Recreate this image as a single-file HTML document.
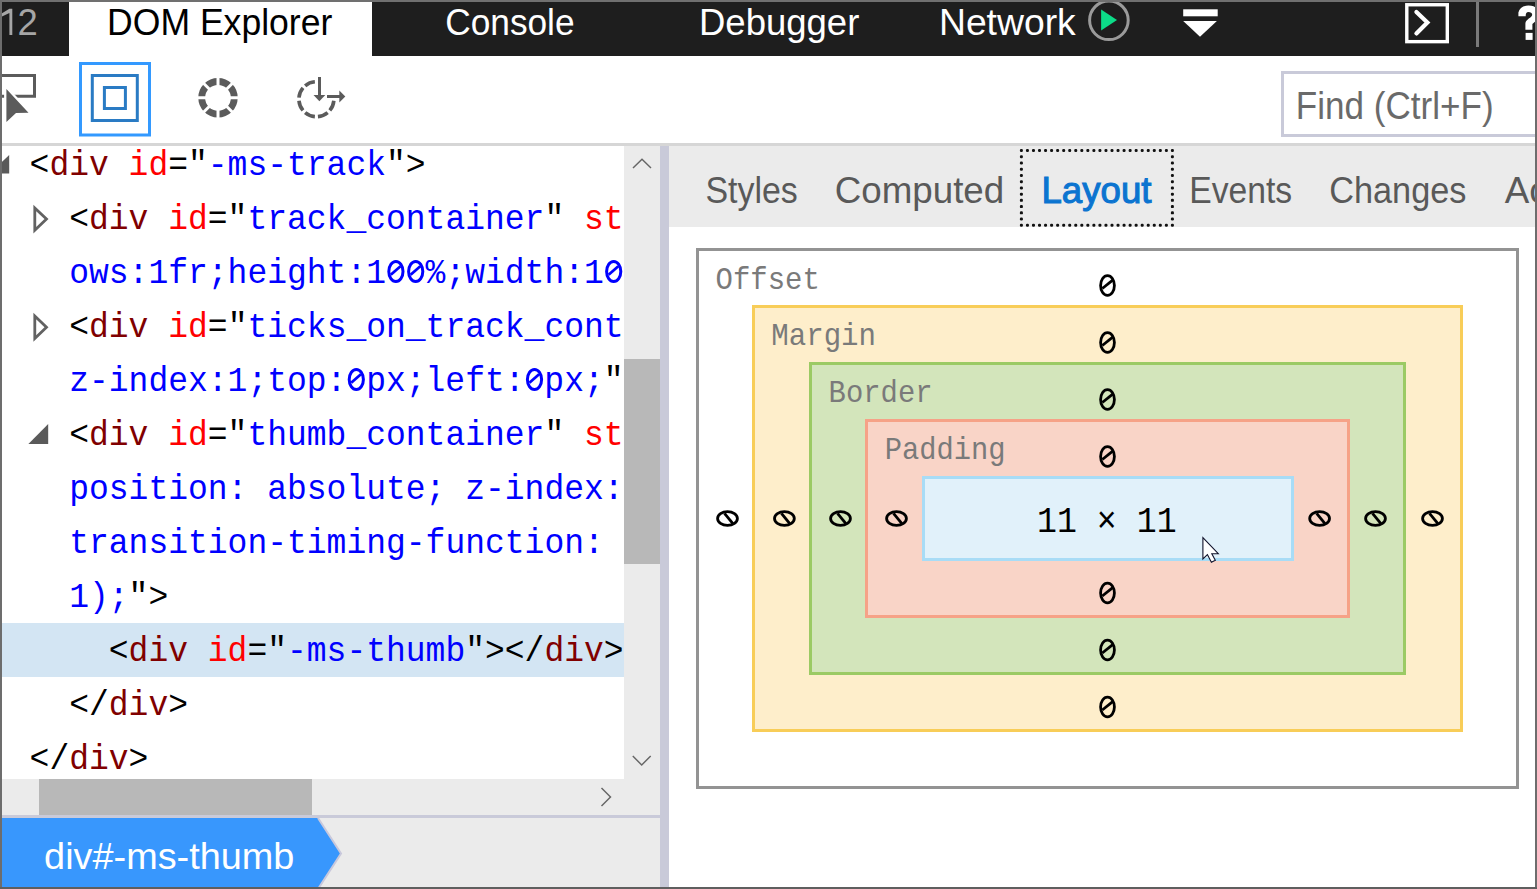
<!DOCTYPE html>
<html><head><meta charset="utf-8"><title>DOM Explorer</title>
<style>
html,body{margin:0;padding:0;width:1537px;height:889px;overflow:hidden;background:#ffffff;}
svg{display:block;}

</style></head><body>
<svg width="1537" height="889" viewBox="0 0 1537 889">
<rect x="0" y="0" width="1537" height="56" fill="#1e1e1e"/>
<rect x="69" y="2" width="303" height="54" fill="#ffffff"/>
<path d="M9.4 8.8 L12.3 8.8 L12.3 35 L9.4 35 L9.4 13 L2 16.5 L2 13.3 Z" fill="#a6a6a6"/>
<text x="17.57" y="35" font-family='"Liberation Sans",sans-serif' font-size="37.5" fill="#a6a6a6" textLength="20.27" lengthAdjust="spacingAndGlyphs" >2</text>
<text x="107.08" y="35" font-family='"Liberation Sans",sans-serif' font-size="37.5" fill="#000000" textLength="225.21" lengthAdjust="spacingAndGlyphs" >DOM Explorer</text>
<text x="445.21" y="35" font-family='"Liberation Sans",sans-serif' font-size="37.5" fill="#ffffff" textLength="129.36" lengthAdjust="spacingAndGlyphs" >Console</text>
<text x="699.01" y="35" font-family='"Liberation Sans",sans-serif' font-size="37.5" fill="#ffffff" textLength="160.30" lengthAdjust="spacingAndGlyphs" >Debugger</text>
<text x="938.94" y="35" font-family='"Liberation Sans",sans-serif' font-size="37.5" fill="#ffffff" textLength="136.81" lengthAdjust="spacingAndGlyphs" >Network</text>
<circle cx="1108.9" cy="20.3" r="19.3" fill="none" stroke="#9a9a9a" stroke-width="3"/>
<path d="M1101.1 9.6 L1117 20 L1101.1 30.5 Z" fill="#0cdc88"/>
<rect x="1183.2" y="9.3" width="34.5" height="7" fill="#ffffff"/>
<path d="M1183.2 21.1 L1216.9 21.1 L1200 36.8 Z" fill="#ffffff"/>
<rect x="1406.8" y="4.75" width="40.5" height="36.9" fill="none" stroke="#ffffff" stroke-width="3.4"/>
<path d="M1416.4 12 L1427.4 22.6 L1416.4 33.4" fill="none" stroke="#ffffff" stroke-width="4.2" stroke-linecap="round"/>
<rect x="1476" y="2" width="3" height="45" fill="#7a7a7a"/>
<path d="M1518.4 16.3 L1518.4 12.5 C1519.5 8 1523 5.6 1528.5 5.6 C1535.5 5.6 1539.5 9.5 1539.5 14.5 C1539.5 19.5 1535 21.5 1532.4 24 L1532.4 29.8 L1525.4 29.8 L1525.4 23.5 C1525.4 19.5 1532.2 17.5 1532.2 14.8 C1532.2 12.8 1530.5 12 1528.5 12 C1526.5 12 1525.7 13.2 1525.7 16.3 Z" fill="#ffffff"/>
<rect x="1525.6" y="32.9" width="7" height="7" fill="#ffffff"/>
<rect x="0" y="56" width="1537" height="87" fill="#ffffff"/>
<rect x="0" y="143" width="1537" height="3" fill="#d6d6d6"/>
<path d="M-10 75.5 H34.5 V96.2 H-10" fill="none" stroke="#5b5b5b" stroke-width="3"/>
<path d="M6.4 89 L28.5 112.8 L16 113 L6.4 122 Z" fill="#5b5b5b" stroke="#ffffff" stroke-width="4.6" stroke-linejoin="miter" style="paint-order:stroke"/>
<rect x="80.5" y="63.5" width="69" height="71.5" fill="none" stroke="#3399ff" stroke-width="3"/>
<rect x="92.3" y="75.5" width="45" height="45" fill="none" stroke="#2a7bc4" stroke-width="3"/>
<rect x="104.4" y="87.5" width="21" height="21" fill="none" stroke="#2a7bc4" stroke-width="3"/>
<circle cx="218" cy="97.8" r="16.3" fill="none" stroke="#5b5b5b" stroke-width="6.8"/>
<line x1="195.00" y1="97.80" x2="241.00" y2="97.80" stroke="#ffffff" stroke-width="3"/>
<line x1="201.74" y1="81.54" x2="234.26" y2="114.06" stroke="#ffffff" stroke-width="3"/>
<line x1="218.00" y1="74.80" x2="218.00" y2="120.80" stroke="#ffffff" stroke-width="3"/>
<line x1="234.26" y1="81.54" x2="201.74" y2="114.06" stroke="#ffffff" stroke-width="3"/>
<path d="M314.87 81.77 A17.5 17.5 0 0 0 305.15 85.79" fill="none" stroke="#5b5b5b" stroke-width="3.6"/>
<path d="M302.99 87.95 A17.5 17.5 0 0 0 298.97 97.67" fill="none" stroke="#5b5b5b" stroke-width="3.6"/>
<path d="M298.97 100.73 A17.5 17.5 0 0 0 302.99 110.45" fill="none" stroke="#5b5b5b" stroke-width="3.6"/>
<path d="M305.15 112.61 A17.5 17.5 0 0 0 314.87 116.63" fill="none" stroke="#5b5b5b" stroke-width="3.6"/>
<path d="M317.93 116.63 A17.5 17.5 0 0 0 327.65 112.61" fill="none" stroke="#5b5b5b" stroke-width="3.6"/>
<path d="M329.81 110.45 A17.5 17.5 0 0 0 333.83 100.73" fill="none" stroke="#5b5b5b" stroke-width="3.6"/>
<rect x="318" y="77" width="3" height="19" fill="#5b5b5b"/>
<path d="M313.5 95 L325.3 95 L319.4 101.2 Z" fill="#5b5b5b"/>
<rect x="327" y="95" width="13" height="3" fill="#5b5b5b"/>
<path d="M339.3 90.4 L345.3 96.5 L339.3 102.4 Z" fill="#5b5b5b"/>
<rect x="1282.5" y="72.5" width="270" height="63" fill="#ffffff" stroke="#c9cad9" stroke-width="3"/>
<text x="1295.82" y="119" font-family='"Liberation Sans",sans-serif' font-size="38" fill="#6a6a6a" textLength="197.75" lengthAdjust="spacingAndGlyphs" >Find (Ctrl+F)</text>
<rect x="0" y="146" width="660" height="669" fill="#ffffff"/>
<rect x="2" y="623" width="622" height="54" fill="#d3e5f3"/>
<text x="29.60" y="175" font-family='"Liberation Mono",monospace' font-size="34.5" textLength="396.00" lengthAdjust="spacingAndGlyphs" xml:space="preserve"><tspan fill="#000000">&lt;</tspan><tspan fill="#800000">div</tspan><tspan fill="#000000"> </tspan><tspan fill="#ff0000">id</tspan><tspan fill="#000000">=&quot;</tspan><tspan fill="#0000ff">-ms-track</tspan><tspan fill="#000000">&quot;&gt;</tspan></text>
<text x="69.20" y="229" font-family='"Liberation Mono",monospace' font-size="34.5" textLength="613.80" lengthAdjust="spacingAndGlyphs" xml:space="preserve"><tspan fill="#000000">&lt;</tspan><tspan fill="#800000">div</tspan><tspan fill="#000000"> </tspan><tspan fill="#ff0000">id</tspan><tspan fill="#000000">=&quot;</tspan><tspan fill="#0000ff">track_container</tspan><tspan fill="#000000">&quot; </tspan><tspan fill="#ff0000">style</tspan></text>
<text x="69.20" y="283" font-family='"Liberation Mono",monospace' font-size="34.5" textLength="594.00" lengthAdjust="spacingAndGlyphs" xml:space="preserve"><tspan fill="#0000ff">ows:1fr;height:1  %;width:1  %</tspan></text><g transform="translate(395.90 271.50)"><ellipse rx="7.1" ry="10" fill="none" stroke="#0000ff" stroke-width="3"/><path d="M-5.1 3.2 L4.6 -5.2" stroke="#0000ff" stroke-width="2.8"/></g><g transform="translate(415.70 271.50)"><ellipse rx="7.1" ry="10" fill="none" stroke="#0000ff" stroke-width="3"/><path d="M-5.1 3.2 L4.6 -5.2" stroke="#0000ff" stroke-width="2.8"/></g><g transform="translate(613.70 271.50)"><ellipse rx="7.1" ry="10" fill="none" stroke="#0000ff" stroke-width="3"/><path d="M-5.1 3.2 L4.6 -5.2" stroke="#0000ff" stroke-width="2.8"/></g><g transform="translate(633.50 271.50)"><ellipse rx="7.1" ry="10" fill="none" stroke="#0000ff" stroke-width="3"/><path d="M-5.1 3.2 L4.6 -5.2" stroke="#0000ff" stroke-width="2.8"/></g>
<text x="69.20" y="337" font-family='"Liberation Mono",monospace' font-size="34.5" textLength="653.40" lengthAdjust="spacingAndGlyphs" xml:space="preserve"><tspan fill="#000000">&lt;</tspan><tspan fill="#800000">div</tspan><tspan fill="#000000"> </tspan><tspan fill="#ff0000">id</tspan><tspan fill="#000000">=&quot;</tspan><tspan fill="#0000ff">ticks_on_track_container</tspan></text>
<text x="69.20" y="391" font-family='"Liberation Mono",monospace' font-size="34.5" textLength="574.20" lengthAdjust="spacingAndGlyphs" xml:space="preserve"><tspan fill="#0000ff">z-index:1;top: px;left: px;</tspan><tspan fill="#000000">&quot;&gt;</tspan></text><g transform="translate(356.30 379.50)"><ellipse rx="7.1" ry="10" fill="none" stroke="#0000ff" stroke-width="3"/><path d="M-5.1 3.2 L4.6 -5.2" stroke="#0000ff" stroke-width="2.8"/></g><g transform="translate(534.50 379.50)"><ellipse rx="7.1" ry="10" fill="none" stroke="#0000ff" stroke-width="3"/><path d="M-5.1 3.2 L4.6 -5.2" stroke="#0000ff" stroke-width="2.8"/></g>
<text x="69.20" y="445" font-family='"Liberation Mono",monospace' font-size="34.5" textLength="613.80" lengthAdjust="spacingAndGlyphs" xml:space="preserve"><tspan fill="#000000">&lt;</tspan><tspan fill="#800000">div</tspan><tspan fill="#000000"> </tspan><tspan fill="#ff0000">id</tspan><tspan fill="#000000">=&quot;</tspan><tspan fill="#0000ff">thumb_container</tspan><tspan fill="#000000">&quot; </tspan><tspan fill="#ff0000">style</tspan></text>
<text x="69.20" y="499" font-family='"Liberation Mono",monospace' font-size="34.5" textLength="594.00" lengthAdjust="spacingAndGlyphs" xml:space="preserve"><tspan fill="#0000ff">position: absolute; z-index: 1</tspan></text>
<text x="69.20" y="553" font-family='"Liberation Mono",monospace' font-size="34.5" textLength="653.40" lengthAdjust="spacingAndGlyphs" xml:space="preserve"><tspan fill="#0000ff">transition-timing-function: cubic</tspan></text>
<text x="69.20" y="607" font-family='"Liberation Mono",monospace' font-size="34.5" textLength="99.00" lengthAdjust="spacingAndGlyphs" xml:space="preserve"><tspan fill="#0000ff">1);</tspan><tspan fill="#000000">&quot;&gt;</tspan></text>
<text x="108.80" y="661" font-family='"Liberation Mono",monospace' font-size="34.5" textLength="514.80" lengthAdjust="spacingAndGlyphs" xml:space="preserve"><tspan fill="#000000">&lt;</tspan><tspan fill="#800000">div</tspan><tspan fill="#000000"> </tspan><tspan fill="#ff0000">id</tspan><tspan fill="#000000">=&quot;</tspan><tspan fill="#0000ff">-ms-thumb</tspan><tspan fill="#000000">&quot;&gt;&lt;/</tspan><tspan fill="#800000">div</tspan><tspan fill="#000000">&gt;</tspan></text>
<text x="69.20" y="715" font-family='"Liberation Mono",monospace' font-size="34.5" textLength="118.80" lengthAdjust="spacingAndGlyphs" xml:space="preserve"><tspan fill="#000000">&lt;/</tspan><tspan fill="#800000">div</tspan><tspan fill="#000000">&gt;</tspan></text>
<text x="29.60" y="769" font-family='"Liberation Mono",monospace' font-size="34.5" textLength="118.80" lengthAdjust="spacingAndGlyphs" xml:space="preserve"><tspan fill="#000000">&lt;/</tspan><tspan fill="#800000">div</tspan><tspan fill="#000000">&gt;</tspan></text>
<path d="M9.2 155 L9.2 173.6 L-10.6 173.6 Z" fill="#5a5a5a"/>
<path d="M34.8 208 L46.5 219 L34.8 230.2 Z" fill="none" stroke="#626262" stroke-width="2.8"/>
<path d="M34.8 316 L46.5 327.2 L34.8 338.5 Z" fill="none" stroke="#626262" stroke-width="2.8"/>
<path d="M48.2 424.1 L48.2 444 L28.4 444 Z" fill="#5a5a5a"/>
<rect x="624" y="146" width="36" height="633" fill="#ebebeb"/>
<rect x="624" y="359" width="36" height="205" fill="#b8b8b8"/>
<path d="M633 168 L642 159.3 L651 168" fill="none" stroke="#666" stroke-width="1.45"/>
<path d="M632.8 756 L641.7 765 L650.7 756" fill="none" stroke="#666" stroke-width="1.45"/>
<rect x="0" y="779" width="660" height="36" fill="#ebebeb"/>
<rect x="39" y="779" width="273" height="36" fill="#b8b8b8"/>
<path d="M601.5 788.1 L610.5 797 L601.5 806" fill="none" stroke="#666" stroke-width="1.45"/>
<rect x="0" y="815" width="660" height="3" fill="#c9cad9"/>
<rect x="0" y="818" width="660" height="71" fill="#ebebeb"/>
<path d="M2 818 L318 818 L341 853.5 L318 889 L2 889 Z" fill="#3897fd"/>
<path d="M318 818 L341 853.5 L318 889" fill="none" stroke="#c8c8dc" stroke-width="2"/>
<text x="44.11" y="868.6" font-family='"Liberation Sans",sans-serif' font-size="37.5" fill="#ffffff" textLength="250.28" lengthAdjust="spacingAndGlyphs" >div#-ms-thumb</text>
<rect x="660" y="146" width="9" height="743" fill="#c9cad9"/>
<rect x="669" y="146" width="868" height="81" fill="#ebebeb"/>
<rect x="669" y="227" width="868" height="662" fill="#ffffff"/>
<text x="705.46" y="203" font-family='"Liberation Sans",sans-serif' font-size="37.5" fill="#595959" textLength="92.37" lengthAdjust="spacingAndGlyphs" >Styles</text>
<text x="834.73" y="203" font-family='"Liberation Sans",sans-serif' font-size="37.5" fill="#595959" textLength="169.53" lengthAdjust="spacingAndGlyphs" >Computed</text>
<text x="1041.50" y="203" font-family='"Liberation Sans",sans-serif' font-size="37.5" fill="#0b74d0" textLength="109.97" lengthAdjust="spacingAndGlyphs" stroke="#0b74d0" stroke-width="1.1">Layout</text>
<text x="1189.24" y="203" font-family='"Liberation Sans",sans-serif' font-size="37.5" fill="#595959" textLength="102.98" lengthAdjust="spacingAndGlyphs" >Events</text>
<text x="1329.26" y="203" font-family='"Liberation Sans",sans-serif' font-size="37.5" fill="#595959" textLength="137.18" lengthAdjust="spacingAndGlyphs" >Changes</text>
<text x="1504.63" y="203" font-family='"Liberation Sans",sans-serif' font-size="37.5" fill="#595959" textLength="200.14" lengthAdjust="spacingAndGlyphs" >Accessibility</text>
<g fill="#111"><rect x="1019.90" y="149.00" width="3" height="3" rx="1.2"/><rect x="1019.90" y="223.80" width="3" height="3" rx="1.2"/><rect x="1025.94" y="149.00" width="3" height="3" rx="1.2"/><rect x="1025.94" y="223.80" width="3" height="3" rx="1.2"/><rect x="1031.98" y="149.00" width="3" height="3" rx="1.2"/><rect x="1031.98" y="223.80" width="3" height="3" rx="1.2"/><rect x="1038.02" y="149.00" width="3" height="3" rx="1.2"/><rect x="1038.02" y="223.80" width="3" height="3" rx="1.2"/><rect x="1044.06" y="149.00" width="3" height="3" rx="1.2"/><rect x="1044.06" y="223.80" width="3" height="3" rx="1.2"/><rect x="1050.10" y="149.00" width="3" height="3" rx="1.2"/><rect x="1050.10" y="223.80" width="3" height="3" rx="1.2"/><rect x="1056.14" y="149.00" width="3" height="3" rx="1.2"/><rect x="1056.14" y="223.80" width="3" height="3" rx="1.2"/><rect x="1062.18" y="149.00" width="3" height="3" rx="1.2"/><rect x="1062.18" y="223.80" width="3" height="3" rx="1.2"/><rect x="1068.22" y="149.00" width="3" height="3" rx="1.2"/><rect x="1068.22" y="223.80" width="3" height="3" rx="1.2"/><rect x="1074.26" y="149.00" width="3" height="3" rx="1.2"/><rect x="1074.26" y="223.80" width="3" height="3" rx="1.2"/><rect x="1080.30" y="149.00" width="3" height="3" rx="1.2"/><rect x="1080.30" y="223.80" width="3" height="3" rx="1.2"/><rect x="1086.34" y="149.00" width="3" height="3" rx="1.2"/><rect x="1086.34" y="223.80" width="3" height="3" rx="1.2"/><rect x="1092.38" y="149.00" width="3" height="3" rx="1.2"/><rect x="1092.38" y="223.80" width="3" height="3" rx="1.2"/><rect x="1098.42" y="149.00" width="3" height="3" rx="1.2"/><rect x="1098.42" y="223.80" width="3" height="3" rx="1.2"/><rect x="1104.46" y="149.00" width="3" height="3" rx="1.2"/><rect x="1104.46" y="223.80" width="3" height="3" rx="1.2"/><rect x="1110.50" y="149.00" width="3" height="3" rx="1.2"/><rect x="1110.50" y="223.80" width="3" height="3" rx="1.2"/><rect x="1116.54" y="149.00" width="3" height="3" rx="1.2"/><rect x="1116.54" y="223.80" width="3" height="3" rx="1.2"/><rect x="1122.58" y="149.00" width="3" height="3" rx="1.2"/><rect x="1122.58" y="223.80" width="3" height="3" rx="1.2"/><rect x="1128.62" y="149.00" width="3" height="3" rx="1.2"/><rect x="1128.62" y="223.80" width="3" height="3" rx="1.2"/><rect x="1134.66" y="149.00" width="3" height="3" rx="1.2"/><rect x="1134.66" y="223.80" width="3" height="3" rx="1.2"/><rect x="1140.70" y="149.00" width="3" height="3" rx="1.2"/><rect x="1140.70" y="223.80" width="3" height="3" rx="1.2"/><rect x="1146.74" y="149.00" width="3" height="3" rx="1.2"/><rect x="1146.74" y="223.80" width="3" height="3" rx="1.2"/><rect x="1152.78" y="149.00" width="3" height="3" rx="1.2"/><rect x="1152.78" y="223.80" width="3" height="3" rx="1.2"/><rect x="1158.82" y="149.00" width="3" height="3" rx="1.2"/><rect x="1158.82" y="223.80" width="3" height="3" rx="1.2"/><rect x="1164.86" y="149.00" width="3" height="3" rx="1.2"/><rect x="1164.86" y="223.80" width="3" height="3" rx="1.2"/><rect x="1170.90" y="149.00" width="3" height="3" rx="1.2"/><rect x="1170.90" y="223.80" width="3" height="3" rx="1.2"/><rect x="1019.90" y="155.23" width="3" height="3" rx="1.2"/><rect x="1170.90" y="155.23" width="3" height="3" rx="1.2"/><rect x="1019.90" y="161.47" width="3" height="3" rx="1.2"/><rect x="1170.90" y="161.47" width="3" height="3" rx="1.2"/><rect x="1019.90" y="167.70" width="3" height="3" rx="1.2"/><rect x="1170.90" y="167.70" width="3" height="3" rx="1.2"/><rect x="1019.90" y="173.93" width="3" height="3" rx="1.2"/><rect x="1170.90" y="173.93" width="3" height="3" rx="1.2"/><rect x="1019.90" y="180.17" width="3" height="3" rx="1.2"/><rect x="1170.90" y="180.17" width="3" height="3" rx="1.2"/><rect x="1019.90" y="186.40" width="3" height="3" rx="1.2"/><rect x="1170.90" y="186.40" width="3" height="3" rx="1.2"/><rect x="1019.90" y="192.63" width="3" height="3" rx="1.2"/><rect x="1170.90" y="192.63" width="3" height="3" rx="1.2"/><rect x="1019.90" y="198.87" width="3" height="3" rx="1.2"/><rect x="1170.90" y="198.87" width="3" height="3" rx="1.2"/><rect x="1019.90" y="205.10" width="3" height="3" rx="1.2"/><rect x="1170.90" y="205.10" width="3" height="3" rx="1.2"/><rect x="1019.90" y="211.33" width="3" height="3" rx="1.2"/><rect x="1170.90" y="211.33" width="3" height="3" rx="1.2"/><rect x="1019.90" y="217.57" width="3" height="3" rx="1.2"/><rect x="1170.90" y="217.57" width="3" height="3" rx="1.2"/></g>
<rect x="697.5" y="249.5" width="820" height="538" fill="#ffffff" stroke="#939393" stroke-width="3"/>
<rect x="753.5" y="306.5" width="708" height="424" fill="#feeecb" stroke="#f8cd58" stroke-width="3"/>
<rect x="810.5" y="363.5" width="594" height="310" fill="#d3e5bb" stroke="#9bca64" stroke-width="3"/>
<rect x="866.5" y="420.5" width="482" height="196" fill="#f9d4c7" stroke="#f6a287" stroke-width="3"/>
<rect x="923.5" y="477.5" width="369" height="82" fill="#e1f1fa" stroke="#a8dcf6" stroke-width="3"/>
<text x="715.56" y="288.6" font-family='"Liberation Mono",monospace' font-size="30.5" fill="#7a7a7a" textLength="104.34" lengthAdjust="spacingAndGlyphs" >Offset</text>
<text x="771.27" y="345.3" font-family='"Liberation Mono",monospace' font-size="30.5" fill="#7a7a7a" textLength="104.79" lengthAdjust="spacingAndGlyphs" >Margin</text>
<text x="828.62" y="402" font-family='"Liberation Mono",monospace' font-size="30.5" fill="#7a7a7a" textLength="103.98" lengthAdjust="spacingAndGlyphs" >Border</text>
<text x="884.73" y="459" font-family='"Liberation Mono",monospace' font-size="30.5" fill="#7a7a7a" textLength="120.73" lengthAdjust="spacingAndGlyphs" >Padding</text>
<text x="1037.00" y="532" font-family='"Liberation Mono",monospace' font-size="36" fill="#000000" textLength="139.61" lengthAdjust="spacingAndGlyphs" >11 × 11</text>
<g transform="translate(1107.5 285.5) rotate(0)"><ellipse cx="0" cy="0" rx="6.9" ry="9.9" fill="none" stroke="#000" stroke-width="2.8"/><path d="M-5.2 3 L5.2 -5.4" stroke="#000" stroke-width="2.8"/></g>
<g transform="translate(1107.5 342.5) rotate(0)"><ellipse cx="0" cy="0" rx="6.9" ry="9.9" fill="none" stroke="#000" stroke-width="2.8"/><path d="M-5.2 3 L5.2 -5.4" stroke="#000" stroke-width="2.8"/></g>
<g transform="translate(1107.5 399.5) rotate(0)"><ellipse cx="0" cy="0" rx="6.9" ry="9.9" fill="none" stroke="#000" stroke-width="2.8"/><path d="M-5.2 3 L5.2 -5.4" stroke="#000" stroke-width="2.8"/></g>
<g transform="translate(1107.5 456.5) rotate(0)"><ellipse cx="0" cy="0" rx="6.9" ry="9.9" fill="none" stroke="#000" stroke-width="2.8"/><path d="M-5.2 3 L5.2 -5.4" stroke="#000" stroke-width="2.8"/></g>
<g transform="translate(1107.5 593) rotate(0)"><ellipse cx="0" cy="0" rx="6.9" ry="9.9" fill="none" stroke="#000" stroke-width="2.8"/><path d="M-5.2 3 L5.2 -5.4" stroke="#000" stroke-width="2.8"/></g>
<g transform="translate(1107.5 650) rotate(0)"><ellipse cx="0" cy="0" rx="6.9" ry="9.9" fill="none" stroke="#000" stroke-width="2.8"/><path d="M-5.2 3 L5.2 -5.4" stroke="#000" stroke-width="2.8"/></g>
<g transform="translate(1107.5 707) rotate(0)"><ellipse cx="0" cy="0" rx="6.9" ry="9.9" fill="none" stroke="#000" stroke-width="2.8"/><path d="M-5.2 3 L5.2 -5.4" stroke="#000" stroke-width="2.8"/></g>
<g transform="translate(727.5 518.5) rotate(90)"><ellipse cx="0" cy="0" rx="6.9" ry="9.9" fill="none" stroke="#000" stroke-width="2.8"/><path d="M-5.2 3 L5.2 -5.4" stroke="#000" stroke-width="2.8"/></g>
<g transform="translate(784.4 518.5) rotate(90)"><ellipse cx="0" cy="0" rx="6.9" ry="9.9" fill="none" stroke="#000" stroke-width="2.8"/><path d="M-5.2 3 L5.2 -5.4" stroke="#000" stroke-width="2.8"/></g>
<g transform="translate(840.5 518.5) rotate(90)"><ellipse cx="0" cy="0" rx="6.9" ry="9.9" fill="none" stroke="#000" stroke-width="2.8"/><path d="M-5.2 3 L5.2 -5.4" stroke="#000" stroke-width="2.8"/></g>
<g transform="translate(896.5 518.5) rotate(90)"><ellipse cx="0" cy="0" rx="6.9" ry="9.9" fill="none" stroke="#000" stroke-width="2.8"/><path d="M-5.2 3 L5.2 -5.4" stroke="#000" stroke-width="2.8"/></g>
<g transform="translate(1319.6 518.5) rotate(90)"><ellipse cx="0" cy="0" rx="6.9" ry="9.9" fill="none" stroke="#000" stroke-width="2.8"/><path d="M-5.2 3 L5.2 -5.4" stroke="#000" stroke-width="2.8"/></g>
<g transform="translate(1375.5 518.5) rotate(90)"><ellipse cx="0" cy="0" rx="6.9" ry="9.9" fill="none" stroke="#000" stroke-width="2.8"/><path d="M-5.2 3 L5.2 -5.4" stroke="#000" stroke-width="2.8"/></g>
<g transform="translate(1432.5 518.5) rotate(90)"><ellipse cx="0" cy="0" rx="6.9" ry="9.9" fill="none" stroke="#000" stroke-width="2.8"/><path d="M-5.2 3 L5.2 -5.4" stroke="#000" stroke-width="2.8"/></g>
<path d="M1202.9 537.6 L1202.9 559 L1207.4 554.6 L1211.4 562.2 L1215.3 560.3 L1211.8 553.7 L1218.3 553.7 Z" fill="#fff" stroke="#10122a" stroke-width="1.1" stroke-linejoin="miter"/>
<rect x="0" y="0" width="1537" height="2" fill="#707070"/>
<rect x="0" y="0" width="2" height="889" fill="#6d6d6d"/>
<rect x="1535" y="0" width="2" height="889" fill="#6d6d6d"/>
<rect x="0" y="887" width="1537" height="2" fill="#5f5f5f"/>
</svg>
</body></html>
